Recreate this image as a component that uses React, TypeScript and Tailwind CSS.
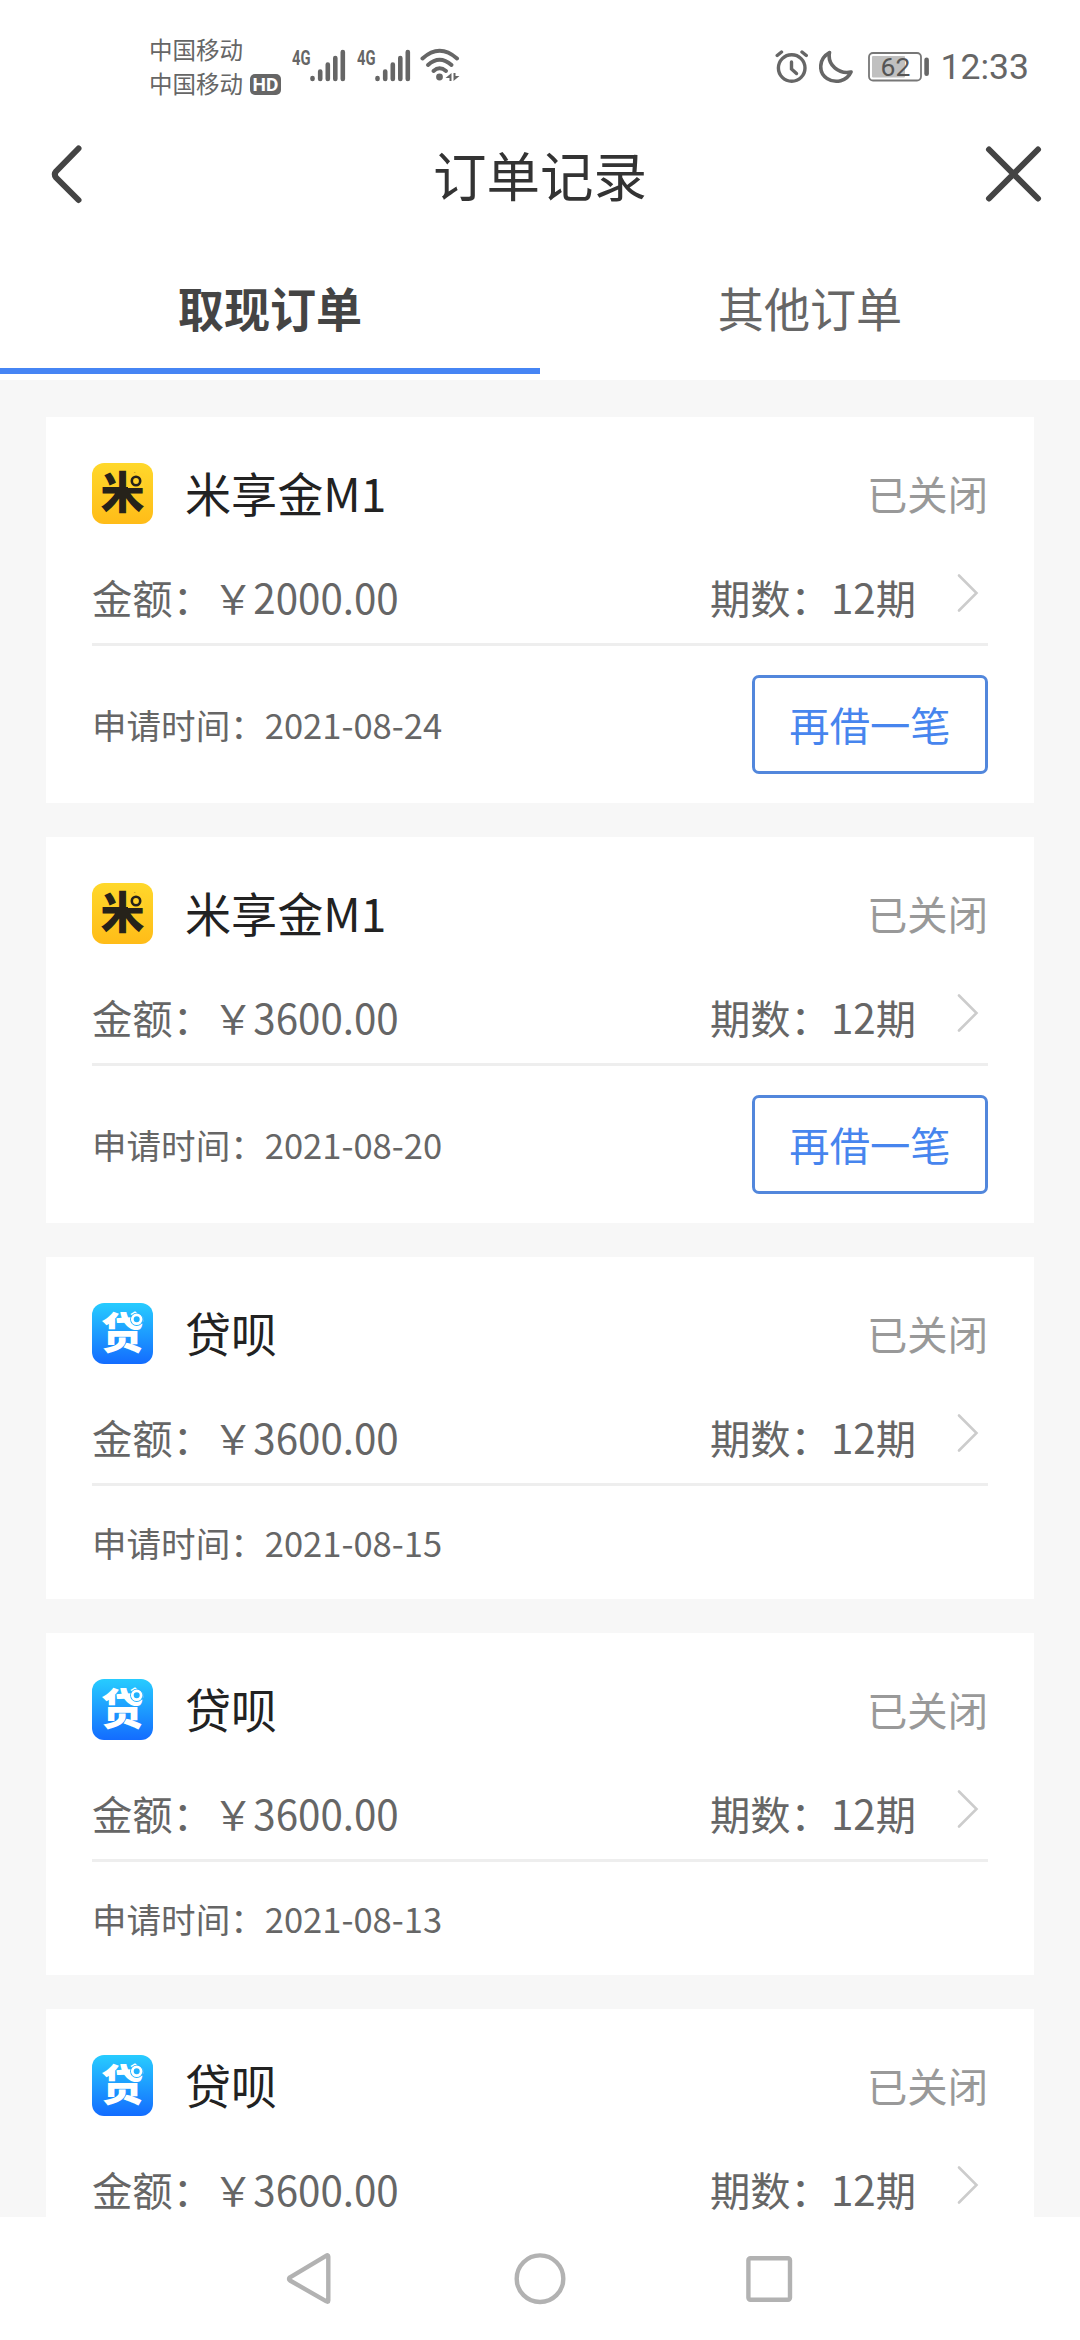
import React from "react"

type Brand = "mi" | "dai"

interface Order {
  brand: Brand
  name: string
  status: string
  amount: string
  periods: string
  date: string
  canBorrow: boolean
}

const orders: Order[] = [
  { brand: "mi", name: "米享金M1", status: "已关闭", amount: "2000.00", periods: "12期", date: "2021-08-24", canBorrow: true },
  { brand: "mi", name: "米享金M1", status: "已关闭", amount: "3600.00", periods: "12期", date: "2021-08-20", canBorrow: true },
  { brand: "dai", name: "贷呗", status: "已关闭", amount: "3600.00", periods: "12期", date: "2021-08-15", canBorrow: false },
  { brand: "dai", name: "贷呗", status: "已关闭", amount: "3600.00", periods: "12期", date: "2021-08-13", canBorrow: false },
]

// last row is only partly visible above the nav bar
const lastOrder = { brand: "dai" as Brand, name: "贷呗", status: "已关闭", amount: "3600.00", periods: "12期" }

const SignalIcon = () => (
  <svg width="54" height="36" viewBox="0 0 54 36" fill="none" stroke="#666" strokeWidth="4.6" strokeLinecap="round">
    <text
      x="0"
      y="17.5"
      fill="#666"
      stroke="none"
      fontFamily="Roboto, sans-serif"
      fontWeight="700"
      fontSize="20.5"
      textLength="18.5"
      lengthAdjust="spacingAndGlyphs"
    >
      4G
    </text>
    <path d="M20.5 31v1M28.2 24.5v7.5M35.8 17.5v14.5M43.3 11v21M50.8 5v27" />
  </svg>
)

const WifiIcon = () => (
  <svg width="40" height="34" viewBox="0 0 40 34" fill="none" stroke="#666" strokeWidth="4" strokeLinecap="round">
    <path d="M2.5 10.5Q19.5 -5 37 10.5" />
    <path d="M8 17Q19.5 6.5 31.5 17" />
    <path d="M13.5 23Q19.5 17.5 26 23" />
    <circle cx="19.5" cy="29" r="3.4" fill="#666" stroke="none" />
    <path d="M31.5 25v8h-2v-3h-4zM33.5 25h2v3h4l-6 5z" fill="#666" stroke="none" />
  </svg>
)

const AlarmIcon = () => (
  <svg width="34" height="34" viewBox="0 0 34 34" fill="none" stroke="#666" strokeWidth="3.4" strokeLinecap="round">
    <circle cx="16.7" cy="18" r="13.3" />
    <path d="M16.5 12v7l5 4.5" />
    <path d="M2.2 5.5L6.5 2M27 2l4.3 3.5" />
  </svg>
)

const MoonIcon = () => (
  <svg width="35" height="34" viewBox="0 0 35 34" fill="none" stroke="#666" strokeWidth="3.6" strokeLinejoin="round">
    <path d="M10.500 2.500C-1 9 -.5 23 8 28.500C16.500 34 28 31 32 22C20 24.500 8 15 10.500 2.500Z" />
  </svg>
)

const BatteryIcon = () => (
  <svg width="62" height="30" viewBox="0 0 62 30">
    <rect x="1" y="1" width="52" height="27.5" rx="4" fill="none" stroke="#777" strokeWidth="1.8" />
    <rect x="4" y="4" width="33" height="21.5" rx="1" fill="#c0c0c0" />
    <rect x="56.3" y="5.5" width="4.6" height="18.5" rx="2.3" fill="#666" />
    <text x="27.5" y="24" textAnchor="middle" fontFamily="Roboto, sans-serif" fontSize="26.5" fill="#555">
      62
    </text>
  </svg>
)

const StatusBar = () => (
  <div className="flex h-[117px] shrink-0 items-start justify-between pr-[51px] pl-[149px] text-[#666]">
    <div className="flex">
      <div className="pt-[32px] text-[23.5px] leading-[34px]">
        <div>中国移动</div>
        <div className="flex items-center gap-[7px]">
          中国移动
          <span className="mt-[2px] flex h-[21px] w-[31px] items-center justify-center rounded-[5px] bg-[#666] font-[Roboto] text-[19px] leading-none font-bold text-white">
            HD
          </span>
        </div>
      </div>
      <div className="mt-[47px] ml-[11px] flex gap-[11px]">
        <SignalIcon />
        <SignalIcon />
      </div>
      <div className="mt-[48px] ml-[9px]">
        <WifiIcon />
      </div>
    </div>
    <div className="flex pt-[50px]">
      <AlarmIcon />
      <div className="ml-[10px]">
        <MoonIcon />
      </div>
      <div className="mt-[2px] ml-[14px]">
        <BatteryIcon />
      </div>
      <div className="-mt-px ml-[11px] font-[Roboto] text-[35.5px] leading-[37px]">12:33</div>
    </div>
  </div>
)

const Header = () => (
  <div className="flex h-[113px] shrink-0 items-center justify-between px-[36px]">
    <svg width="60" height="64" viewBox="-12 0 60 64" fill="none" stroke="#444" strokeWidth="6" strokeLinecap="round">
      <path d="M30.5 6.5L8 29.5Q5.5 32.5 8 35.500L30.5 58" />
    </svg>
    <h1 className="text-[53.5px] leading-none text-[#333]">订单记录</h1>
    <svg width="60" height="60" viewBox="0 0 60 60" fill="none" stroke="#444" strokeWidth="6" strokeLinecap="round">
      <path d="M5 5.500L54 54.500M54 5.500L5 54.500" />
    </svg>
  </div>
)

const Tabs = () => (
  <div className="grid h-[150px] shrink-0 grid-cols-2 pb-[6px] text-center text-[46.08px]">
    <div className="flex items-center justify-center border-b-[6px] border-[#4685f4] pt-[17px] font-bold text-[#444]">
      取现订单
    </div>
    <div className="flex items-center justify-center border-b-[6px] border-transparent pt-[17px] text-[#666]">
      其他订单
    </div>
  </div>
)

const BrandLogo = ({ brand }: { brand: Brand }) => {
  if (brand === "mi") {
    return (
      <svg className="overflow-visible" width="61" height="61" viewBox="0 0 61 61">
        <defs>
          <linearGradient id="mi-bg" x1="0" y1="0" x2="0" y2="1">
            <stop offset="0" stopColor="#ffd82b" />
            <stop offset="1" stopColor="#ffbc18" />
          </linearGradient>
        </defs>
        <rect width="61" height="61" rx="12" fill="url(#mi-bg)" />
        <text x="30.5" y="46" textAnchor="middle" fontFamily="Noto Sans CJK SC, sans-serif" fontWeight="900" fontSize="44" fill="#26221a">
          米
        </text>
        <path d="M36 10h16v15H36z" fill="#ffd128" />
        <circle cx="44" cy="18" r="4.2" fill="none" stroke="#26221a" strokeWidth="2.6" />
      </svg>
    )
  }
  return (
    <svg className="overflow-visible" width="61" height="61" viewBox="0 0 61 61">
      <defs>
        <linearGradient id="dai-bg" x1="0" y1="0" x2="0" y2="1">
          <stop offset="0" stopColor="#27ccff" />
          <stop offset="1" stopColor="#136cff" />
        </linearGradient>
      </defs>
      <rect width="61" height="61" rx="12" fill="url(#dai-bg)" />
      <text x="30.5" y="46" textAnchor="middle" fontFamily="Noto Sans CJK SC, sans-serif" fontWeight="900" fontSize="43" fill="#fff">
        贷
      </text>
      <circle cx="44.7" cy="16.3" r="6.6" fill="#20b2ff" />
      <circle cx="44.7" cy="16.3" r="4.4" fill="none" stroke="#fff" strokeWidth="2.8" />
    </svg>
  )
}

const OrderSummary = ({ order }: { order: Omit<Order, "date" | "canBorrow"> }) => (
  <>
    <div className="flex h-[61px] items-center">
      <BrandLogo brand={order.brand} />
      <span className="mb-[2px] ml-8 text-[46.08px] text-[#222]">{order.name}</span>
      <span className="ml-auto text-[#999]">{order.status}</span>
    </div>
    <div className="mt-[25px] flex h-[94px] items-center">
      <span className="mt-[2px]">金额：￥{order.amount}</span>
      <span className="mt-[2px] ml-auto">期数：{order.periods}</span>
      <svg
        className="mr-[8px] mb-[6px] ml-[40px]"
        width="24"
        height="40"
        viewBox="0 0 24 40"
        fill="none"
        stroke="#ccc"
        strokeWidth="2.6"
        strokeLinecap="round"
      >
        <path d="M3 2.5L20.5 20L3 37.5" />
      </svg>
    </div>
  </>
)

const OrderCard = ({ order }: { order: Order }) => (
  <div className="shrink-0 bg-white px-[46px] pt-[46px] text-[40.32px] leading-none text-[#666]">
    <OrderSummary order={order} />
    <div className="h-[3px] bg-[#eee]" />
    <div className={order.canBorrow ? "flex h-[157px] items-center justify-between" : "flex h-[113px] items-center"}>
      <span className="text-[34.56px]">申请时间：{order.date}</span>
      {order.canBorrow && (
        <button className="h-[99px] w-[236px] rounded-[7px] border-[3px] border-[#5287dc] text-[#4785ee]">
          再借一笔
        </button>
      )}
    </div>
  </div>
)

const NavBar = () => (
  <div className="flex h-[123px] shrink-0 items-start justify-between bg-white pr-[282px] pl-[284px] pt-[34px]">
    <svg width="52" height="56" viewBox="0 0 52 56" fill="none" stroke="#b2b2b2" strokeWidth="4.4" strokeLinejoin="round">
      <path d="M44.300 5.500V49.500Q44.300 51.500 42 50.200L6 29.500Q4 28 6 26.300L42 4.800Q44.300 3.500 44.300 5.500Z" />
    </svg>
    <svg width="56" height="56" viewBox="1 0 56 56" fill="none" stroke="#b2b2b2" strokeWidth="4.4">
      <circle cx="28" cy="27.7" r="23.3" />
    </svg>
    <svg width="52" height="56" viewBox="0 0 52 56" fill="none" stroke="#b2b2b2" strokeWidth="4.4">
      <rect x="2.4" y="7.2" width="41.6" height="41.6" rx="2" />
    </svg>
  </div>
)

const App = () => {
  return (
    <div className="flex h-[2340px] w-[1080px] flex-col overflow-hidden bg-white font-['Noto_Sans_CJK_SC',sans-serif]">
      <StatusBar />
      <Header />
      <Tabs />
      <div className="flex min-h-0 flex-1 flex-col gap-[34px] overflow-hidden bg-[#f7f7f7] px-[46px] pt-[37px]">
        {orders.map(order => (
          <OrderCard key={order.date} order={order} />
        ))}
        <div className="shrink-0 bg-white px-[46px] pt-[46px] text-[40.32px] leading-none text-[#666]">
          <OrderSummary order={lastOrder} />
        </div>
      </div>
      <NavBar />
    </div>
  )
}

export default App
